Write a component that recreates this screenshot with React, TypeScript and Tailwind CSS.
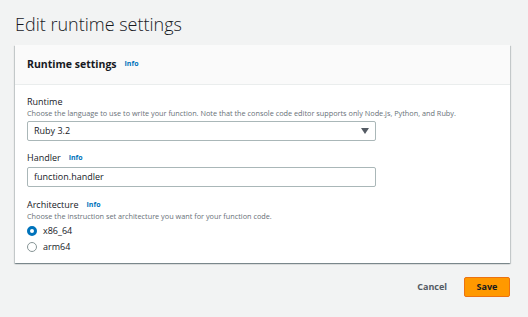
import { useState } from "react"

const font = { fontFamily: '"Open Sans", "Noto Sans", Arial, sans-serif' }

function InfoLink() {
  return <span className="ml-[8px] text-[7px] font-bold text-[#0073bb]">Info</span>
}

function Radio({ checked, label }: { checked: boolean; label: string }) {
  return (
    <label className="flex h-[16px] items-center gap-[6px] text-[9px] text-[#16191f]">
      {checked ? (
        <span className="box-border h-[10px] w-[10px] rounded-full border-[3px] border-[#0073bb] bg-white" />
      ) : (
        <span className="box-border h-[10px] w-[10px] rounded-full border border-[#879596] bg-white" />
      )}
      {label}
    </label>
  )
}

export default function App() {
  const [arch] = useState("x86_64")

  return (
    <div className="h-[317px] w-[528px] bg-[#f2f3f3] px-[15px] pt-[10px]" style={font}>
      <h1 className="text-[18px] font-light leading-[28px] text-[#16191f]">Edit runtime settings</h1>

      <div className="mt-[7px] w-[495px] bg-white shadow-[0_1px_1px_0_rgba(0,28,36,0.3),1px_1px_1px_0_rgba(0,28,36,0.15),-1px_1px_1px_0_rgba(0,28,36,0.15)]">
        <div className="flex h-[40px] items-center border-b border-[#eaeded] bg-[#fafafa] px-[12px]">
          <h2 className="text-[10.5px] font-bold text-[#16191f]">Runtime settings</h2>
          <InfoLink />
        </div>

        <div className="px-[12px] pb-[8px] pt-[11px]">
          <div className="text-[9px] leading-[12px] text-[#16191f]">Runtime</div>
          <div className="text-[7.3px] leading-[11px] text-[#687078]">
            Choose the language to use to write your function. Note that the console code editor supports only Node.js,
            Python, and Ruby.
          </div>
          <div className="mt-[2px] flex h-[20px] w-[349px] items-center justify-between rounded-[2px] border border-[#aab7b8] px-[6px] text-[9px] text-[#16191f]">
            <span>Ruby 3.2</span>
            <svg width="8" height="6" viewBox="0 0 8 6">
              <path d="M0 0h8L4 6z" fill="#545b64" />
            </svg>
          </div>

          <div className="mt-[11px] flex items-center text-[9px] leading-[12px] text-[#16191f]">
            Handler
            <InfoLink />
          </div>
          <div className="mt-[3px] flex h-[20px] w-[349px] items-center rounded-[2px] border border-[#aab7b8] px-[6px] text-[9px] text-[#16191f]">
            function.handler
          </div>

          <div className="mt-[12px] flex items-center text-[9px] leading-[12px] text-[#16191f]">
            Architecture
            <InfoLink />
          </div>
          <div className="text-[7.3px] leading-[11px] text-[#687078]">
            Choose the instruction set architecture you want for your function code.
          </div>
          <div className="mt-[1px] flex flex-col">
            <Radio checked={arch === "x86_64"} label="x86_64" />
            <Radio checked={arch === "arm64"} label="arm64" />
          </div>
        </div>
      </div>

      <div className="mt-[14px] flex w-[495px] items-center justify-end gap-[17px]">
        <button className="text-[9px] font-bold text-[#545b64]">Cancel</button>
        <button className="h-[20px] w-[46px] rounded-[2px] border border-[#ec7211] bg-[#ff9900] text-[9px] font-bold text-[#16191f]">
          Save
        </button>
      </div>
    </div>
  )
}
